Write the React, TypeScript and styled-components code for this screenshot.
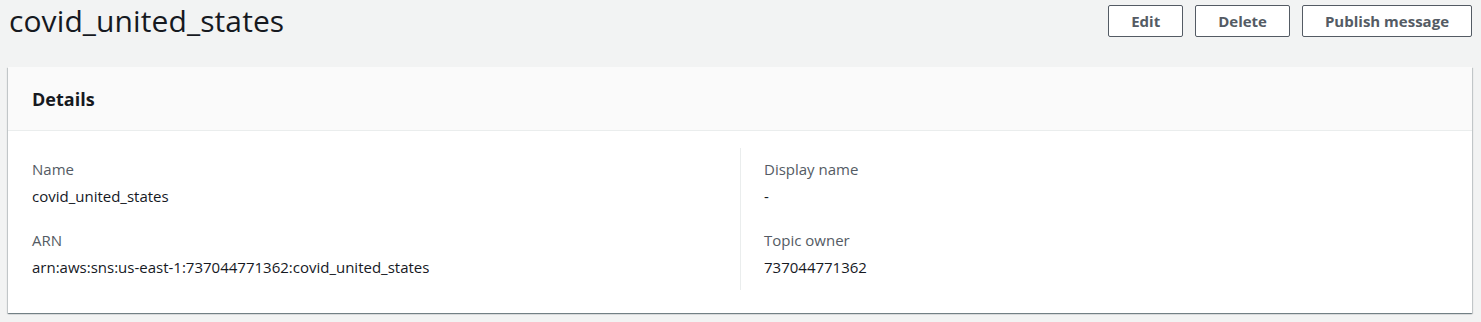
import React from "react";
import styled, { createGlobalStyle } from "styled-components";

const Global = createGlobalStyle`
  html, body { margin: 0; padding: 0; background: #f2f3f3; }
  body { font-family: "Open Sans", "Noto Sans", Arial, sans-serif; color: #16191f; }
  * { box-sizing: border-box; }
`;

const Page = styled.div`
  padding: 0 9px 9px 8px;
  background: #f2f3f3;
`;

const HeaderRow = styled.div`
  display: flex;
  align-items: flex-start;
  justify-content: space-between;
  height: 67px;
`;

const Title = styled.h1`
  margin: 0;
  padding: 2px 0 0 1px;
  font-size: 30px;
  font-weight: 400;
  line-height: 38px;
  letter-spacing: 0.1px;
  color: #16191f;
`;

const Actions = styled.div`
  display: flex;
  gap: 12px;
  padding-top: 5px;
  padding-right: 0;
`;

const Button = styled.button`
  height: 32px;
  padding: 0 22px;
  border: 1px solid #545b64;
  border-radius: 2px;
  background: #ffffff;
  color: #545b64;
  font-family: inherit;
  font-size: 15px;
  font-weight: 700;
  cursor: pointer;
`;

const Card = styled.section`
  background: #ffffff;
  box-shadow: 0 1px 1px 0 rgba(0, 28, 36, 0.35), 1px 1px 1px 0 rgba(0, 28, 36, 0.15),
    -1px 1px 1px 0 rgba(0, 28, 36, 0.15);
`;

const CardHeader = styled.div`
  height: 64px;
  display: flex;
  align-items: center;
  padding: 0 24px;
  background: #fafafa;
  border-bottom: 1px solid #eaeded;
`;

const CardTitle = styled.h2`
  margin: 0;
  font-size: 18px;
  font-weight: 700;
  line-height: 22px;
  color: #16191f;
`;

const CardBody = styled.div`
  display: grid;
  grid-template-columns: 1fr 1fr;
  padding: 17px 24px 23px;
`;

const Column = styled.div<{ $divider?: boolean }>`
  display: flex;
  flex-direction: column;
  gap: 22px;
  padding: 10px 0 12px ${(p) => (p.$divider ? "23px" : "0")};
  border-left: ${(p) => (p.$divider ? "1px solid #eaeded" : "none")};
`;

const Field = styled.div`
  display: flex;
  flex-direction: column;
  gap: 5px;
`;

const Label = styled.div`
  font-size: 15px;
  line-height: 22px;
  color: #545b64;
`;

const Value = styled.div`
  font-size: 15px;
  line-height: 22px;
  color: #16191f;
`;

const left = [
  { label: "Name", value: "covid_united_states" },
  { label: "ARN", value: "arn:aws:sns:us-east-1:737044771362:covid_united_states" },
];
const right = [
  { label: "Display name", value: "-" },
  { label: "Topic owner", value: "737044771362" },
];

export default function App() {
  return (
    <Page>
      <Global />
      <HeaderRow>
        <Title>covid_united_states</Title>
        <Actions>
          <Button>Edit</Button>
          <Button>Delete</Button>
          <Button>Publish message</Button>
        </Actions>
      </HeaderRow>
      <Card>
        <CardHeader>
          <CardTitle>Details</CardTitle>
        </CardHeader>
        <CardBody>
          <Column>
            {left.map((f) => (
              <Field key={f.label}>
                <Label>{f.label}</Label>
                <Value>{f.value}</Value>
              </Field>
            ))}
          </Column>
          <Column $divider>
            {right.map((f) => (
              <Field key={f.label}>
                <Label>{f.label}</Label>
                <Value>{f.value}</Value>
              </Field>
            ))}
          </Column>
        </CardBody>
      </Card>
    </Page>
  );
}
